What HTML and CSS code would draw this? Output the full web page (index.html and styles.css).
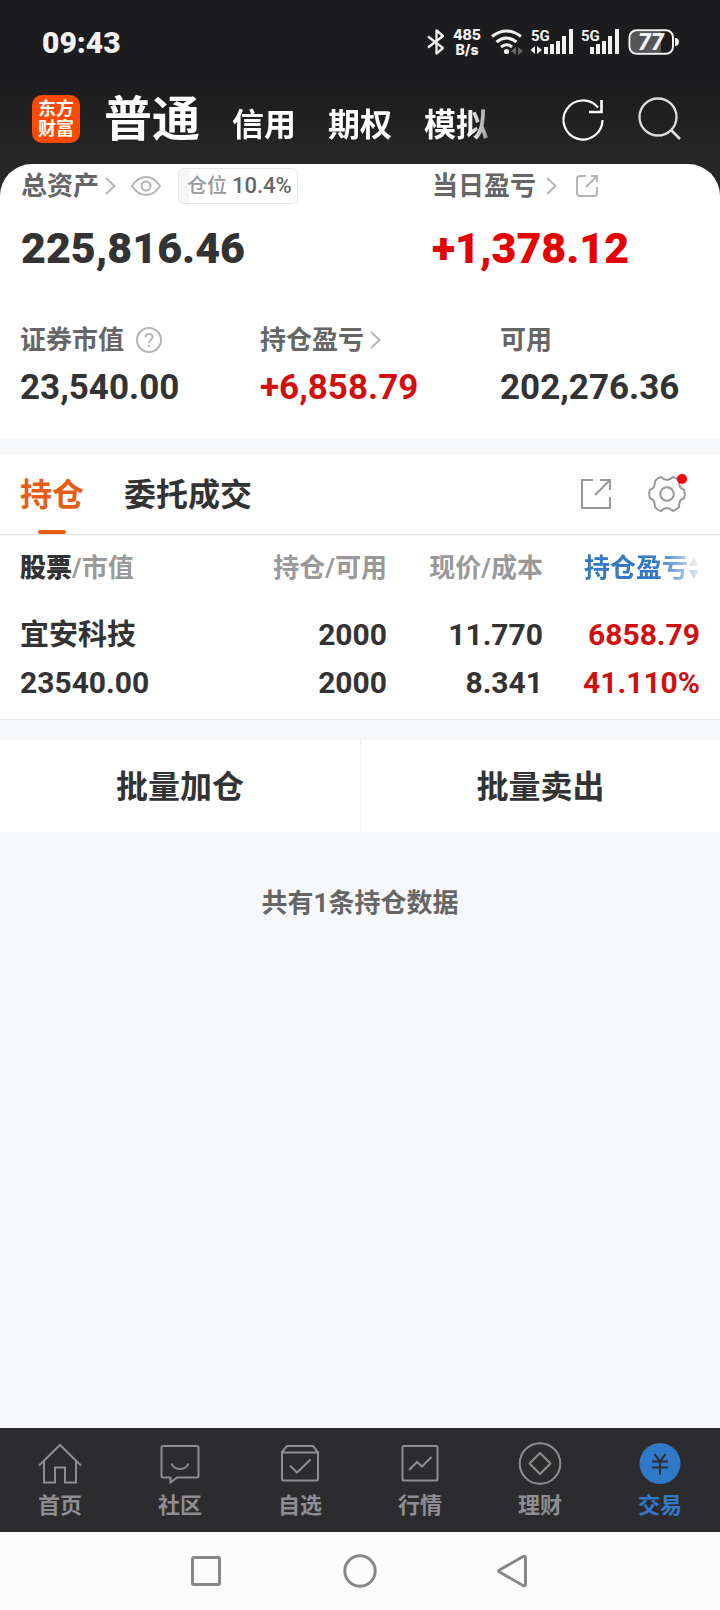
FILE: index.html
```html
<!DOCTYPE html>
<html lang="zh-CN">
<head>
<meta charset="utf-8">
<meta name="viewport" content="width=device-width, initial-scale=1">
<title>普通交易</title>
<link rel="stylesheet" href="styles.css">
</head>
<body>
<header class="top">
  <div class="status">
    <time class="clock">09:43</time>
    <div class="status-icons">
      <svg class="bt" width="18" height="26" viewBox="0 0 18 26"><path d="M1 7.500L16 19L9.500 24.500V1.500L16 7L1 18.500" fill="none" stroke="currentColor" stroke-width="2.300" stroke-linejoin="round"/></svg>
      <span class="speed"><span>485</span><span>B/s</span></span>
      <svg class="wifi" width="32" height="26" viewBox="0 0 32 26"><g fill="none" stroke="currentColor" stroke-width="3"><path d="M1 7.500Q15.500-3.500 30 7.500"/><path d="M5.500 13Q15.500 5 25.500 13"/><path d="M10 18Q15.500 13.500 21 18"/></g><circle cx="15.500" cy="22.500" r="2.600" fill="currentColor"/><path d="M25 18v8l-5-4zM27 18v8l5-4z" fill="#666"/></svg>
      <svg class="cell" width="42" height="26" viewBox="0 0 42 26"><text x="0" y="12" class="net">5G</text><path d="M4 17v8l-4.500-4zM6 17v8l5-4z" fill="currentColor"/><path d="M13 18h4v7h-4zM19 15h4v10h-4zM25 12h4v13h-4zM31 7h4v18h-4zM38 0h4v25h-4z" fill="currentColor"/></svg>
      <svg class="cell" width="38" height="26" viewBox="0 0 38 26"><text x="0" y="12" class="net">5G</text><path d="M9 18h4v7H9zM15 15h4v10h-4zM21 12h4v13h-4zM27 7h4v18h-4zM34 0h4v25h-4z" fill="currentColor"/></svg>
      <svg class="battery" width="52" height="26" viewBox="0 0 52 26"><path d="M7 2.500H33V23.500H7Q3 23.500 3 19V7Q3 2.500 7 2.500z" fill="#555557"/><rect x="1.500" y="1.200" width="43.500" height="23.600" rx="7" fill="none" stroke="currentColor" stroke-width="2"/><path d="M47 9q4 0 4 4t-4 4z" fill="currentColor"/><text x="23" y="21" text-anchor="middle" class="level">77</text></svg>
    </div>
  </div>
  <div class="titlebar">
    <a class="logo" href="#"><span>东方</span><span>财富</span></a>
    <nav class="accounts">
      <a class="current" href="#">普通</a><a href="#">信用</a><a href="#">期权</a><a href="#">模拟</a>
    </nav>
    <button class="icon-btn" aria-label="刷新"><svg width="44" height="44" viewBox="0 0 44 44"><path d="M41.500 23A19.500 19.500 0 1 1 37 10.500" fill="none" stroke="#fff" stroke-width="2.200"/><path d="M40.500 3v12H28" fill="none" stroke="#fff" stroke-width="2.600"/></svg></button>
    <button class="icon-btn" aria-label="搜索"><svg width="44" height="44" viewBox="0 0 44 44"><circle cx="20" cy="20" r="18.500" fill="none" stroke="#ddd" stroke-width="2.300"/><path d="M33 33L42 42" stroke="#ddd" stroke-width="2.600"/></svg></button>
  </div>
</header>
<main>
  <div class="sheet-back">
    <section class="sheet">
      <div class="totals">
        <div>
          <div class="label first">总资产
            <svg class="chev" width="11" height="18" viewBox="0 0 11 18"><path d="M1 1L9.500 9L1 17"/></svg>
            <svg class="eye" width="30" height="20" viewBox="0 0 30 20"><path d="M1 10Q7 1 15 1T29 10Q23 19 15 19T1 10z"/><circle cx="15" cy="10" r="4.500"/></svg>
            <span class="ratio">仓位 <b>10.4%</b></span>
          </div>
          <p class="big">225,816.46</p>
        </div>
        <div>
          <div class="label first daily">当日盈亏
            <svg class="chev" width="11" height="18" viewBox="0 0 11 18"><path d="M1 1L9.500 9L1 17"/></svg>
            <svg class="share" width="24" height="24" viewBox="0 0 24 24"><path d="M11 2H5Q2 2 2 5V19Q2 22 5 22H19Q22 22 22 19V13M16 2H22V8M22 2L11 13"/></svg>
          </div>
          <p class="big up">+1,378.12</p>
        </div>
      </div>
      <div class="stats">
        <div><div class="label">证券市值 <svg class="help" width="26" height="26" viewBox="0 0 26 26"><circle cx="13" cy="13" r="12"/><path d="M9.500 10.500Q9.500 7 13 7T16.500 10Q16.500 11.500 14.500 13T13 16M13 18V20"/></svg></div><p class="mid">23,540.00</p></div>
        <div><div class="label">持仓盈亏 <svg class="chev" width="11" height="18" viewBox="0 0 11 18"><path d="M1 1L9.500 9L1 17"/></svg></div><p class="mid up">+6,858.79</p></div>
        <div><div class="label">可用</div><p class="mid">202,276.36</p></div>
      </div>
    </section>
  </div>
  <section class="holdings">
    <div class="tabs">
      <button class="tab active">持仓</button>
      <button class="tab">委托成交</button>
      <span class="tools">
        <button class="icon-btn" aria-label="分享"><svg width="32" height="32" viewBox="0 0 32 32"><path d="M13 2H2V30H30V19M20 2H30V12M30 2L15 17" fill="none" stroke="#999" stroke-width="2"/></svg></button>
        <button class="icon-btn gear" aria-label="设置"><svg width="38" height="38" viewBox="0 0 38 38"><g fill="none" stroke="#999" stroke-width="2"><path d="M13 2Q16 5 19 5T25 2Q29 3 31 6Q31 14 36 14.500Q37.500 19 36 23.500Q31 24 31 32Q28 35 25 36Q22 33 19 33T13 36Q9 35 7 32Q7 24 2 23.500Q.5 19 2 14.500Q7 14 7 6Q9 3 13 2z" stroke-linejoin="round"/><circle cx="19" cy="19" r="6.800"/></g></svg></button>
      </span>
    </div>
    <table class="grid">
      <thead><tr><th scope="col"><b>股票</b>/市值</th><th scope="col">持仓/可用</th><th scope="col">现价/成本</th><th scope="col" class="sorted"><span class="sort">持仓盈亏<svg width="12" height="24" viewBox="0 0 12 24"><path d="M6 1L11 10H1z" fill="#aaa"/><path d="M6 23L1 14H11z" fill="#3478c8"/></svg></span></th></tr></thead>
      <tbody>
        <tr><td class="name">宜安科技</td><td>2000</td><td>11.770</td><td class="up">6858.79</td></tr>
        <tr><td>23540.00</td><td>2000</td><td>8.341</td><td class="up">41.110%</td></tr>
      </tbody>
    </table>
  </section>
  <div class="batch"><button>批量加仓</button><button>批量卖出</button></div>
  <p class="count">共有1条持仓数据</p>
</main>
<nav class="tabbar">
  <a href="#"><svg width="44" height="44" viewBox="0 0 44 44"><path d="M1 22.500L22 2L43 22.500M6 18V39.500H17V24.500H27V39.500H38V18"/></svg>首页</a>
  <a href="#"><svg width="44" height="44" viewBox="0 0 44 44"><path d="M5 3H39Q40.500 3 40.500 4.500V33Q40.500 34.500 39 34.500H19L12.500 39.500V34.500H5Q3.500 34.500 3.500 33V4.500Q3.500 3 5 3zM13.500 20.500Q15.500 26 22 26T30.500 20.500"/></svg>社区</a>
  <a href="#"><svg width="44" height="44" viewBox="0 0 44 44"><path d="M4 9L9 3H35L40 9V36Q40 37.500 38.500 37.500H5.500Q4 37.500 4 36zM4 9.500H40M12 22.500L19 29.500L32.500 16.500"/></svg>自选</a>
  <a href="#"><svg width="44" height="44" viewBox="0 0 44 44"><rect x="4.500" y="3" width="35" height="34.500" rx="1.500"/><path d="M11 27L19 19L24 23.500L33.500 14"/></svg>行情</a>
  <a href="#"><svg width="44" height="44" viewBox="0 0 44 44"><circle cx="22" cy="20.500" r="20.300"/><path d="M22 10L32.500 20.500L22 31L11.500 20.500z" stroke-linejoin="round"/></svg>理财</a>
  <a href="#" class="on"><svg width="44" height="44" viewBox="0 0 44 44"><circle cx="22" cy="20.500" r="20.500" class="coin"/><path d="M16.500 11L22 18.500L27.500 11M22 18V31.500M14 18.500H30M14 24.500H30" class="yen"/></svg>交易</a>
</nav>
<div class="sysnav">
  <button class="icon-btn" aria-label="最近任务"><svg width="34" height="34" viewBox="0 0 34 34"><rect x="3.500" y="3.500" width="27" height="27" rx="1.500"/></svg></button>
  <button class="icon-btn" aria-label="主屏幕"><svg width="34" height="34" viewBox="0 0 34 34"><circle cx="17" cy="17" r="15.200"/></svg></button>
  <button class="icon-btn" aria-label="返回"><svg width="34" height="34" viewBox="0 0 34 34"><path d="M2.500 16L26 2.500Q28.500 1.500 28.500 4V30Q28.500 32.500 26 31.500L2.500 18Q.5 17 2.500 16z"/></svg></button>
</div>
</body>
</html>
```
FILE: styles.css
```css
* { box-sizing: border-box; }
body {
  margin: 0;
  min-height: 100vh;
  display: flex;
  flex-direction: column;
  background: #f7f8fa;
  color: #333;
  font-family: Roboto, "Noto Sans CJK SC", sans-serif;
  font-weight: 700;
}
p { margin: 0; }
a { color: inherit; text-decoration: none; }
button { border: 0; padding: 0; background: none; color: inherit; font: inherit; }
svg { flex: none; display: block; overflow: visible; }
.icon-btn { display: flex; }

.top { background: linear-gradient(#1c1c1e 50%, #272727); color: #fff; }
.status {
  height: 84px;
  padding: 0 40px 0 42px;
  display: flex;
  align-items: center;
  justify-content: space-between;
  color: #f2f2f2;
}
.clock { font-size: 30px; font-weight: 900; }
.status-icons { display: flex; align-items: center; gap: 8px; }
.speed {
  display: flex;
  flex-direction: column;
  align-items: center;
  font: 800 14px/15px Inter, sans-serif;
}
.wifi { margin-left: 2px; }
.battery { margin-left: 1px; }
.net { font: 700 15px Roboto, sans-serif; fill: currentColor; }
.level { font: italic 900 23px Roboto, sans-serif; fill: currentColor; }
.titlebar {
  height: 80px;
  padding: 0 38px 10px 32px;
  display: flex;
  align-items: center;
}
.titlebar .icon-btn + .icon-btn { margin-left: 33px; }
.logo {
  width: 48px;
  height: 48px;
  border-radius: 10px;
  background: #ff4a00;
  display: flex;
  flex-direction: column;
  align-items: center;
  justify-content: center;
  font-size: 18px;
  line-height: 20px;
}
.accounts {
  flex: 1;
  margin-left: 24px;
  padding-top: 6px;
  display: flex;
  align-items: baseline;
  gap: 32px;
  font-size: 32px;
  line-height: 60px;
  white-space: nowrap;
  overflow: hidden;
  -webkit-mask-image: linear-gradient(to right, #000 calc(100% - 92px), transparent calc(100% - 50px));
  mask-image: linear-gradient(to right, #000 calc(100% - 92px), transparent calc(100% - 50px));
}
.accounts .current { font-size: 48px; }

.sheet-back { background: #272727; }
.sheet { background: #fff; border-radius: 32px 32px 0 0; padding-bottom: 30px; }
.totals { display: grid; grid-template-columns: 3fr 2fr; }
.totals > :first-child { padding-left: 21px; }
.label {
  display: flex;
  align-items: center;
  height: 36px;
  font-size: 26px;
  line-height: 36px;
  color: #666;
  white-space: nowrap;
}
.label.first { height: 44px; }
.label svg { fill: none; stroke: #b5b5b5; stroke-width: 2; }
.label .chev { margin-left: 6px; }
.daily .chev { margin-left: 10px; }
.first .eye { margin-left: 15px; }
.first .share { margin-left: 18px; }
.label .help { margin-left: 12px; }
.ratio {
  margin-left: 17px;
  height: 36px;
  padding: 0 5px 0 8px;
  border: 1px solid #e6e6e8;
  border-radius: 6px;
  background: linear-gradient(to right, #f6f6f9 10px, #fff 10px);
  font-size: 20px;
  line-height: 34px;
  font-weight: 500;
  color: #999;
}
.ratio b { font-size: 22px; font-weight: 500; color: #666; }
.big { margin-top: 16px; font-size: 43px; line-height: 48px; font-weight: 900; }
.stats { display: grid; grid-template-columns: repeat(3, 1fr); margin-top: 50px; }
.stats > * { padding-left: 20px; }
.mid { margin-top: 10px; font-size: 35px; line-height: 40px; }
.up { color: #d20f0f; }
.big.up { color: #e60000; }

.holdings { margin-top: 16px; background: #fff; border-bottom: 1px solid #e8e8ea; }
.tabs {
  height: 81px;
  padding: 0 34px 0 20px;
  display: flex;
  align-items: stretch;
  gap: 40px;
  border-bottom: 1px solid #dcdcdc;
  font-size: 32px;
}
.tab { padding-bottom: 4px; }
.tab.active { color: #e85d16; position: relative; }
.tab.active::after {
  content: "";
  position: absolute;
  left: 50%;
  bottom: 0;
  width: 28px;
  height: 4px;
  margin-left: -14px;
  border-radius: 2px;
  background: #e85d16;
}
.tools { margin-left: auto; display: flex; align-items: center; gap: 36px; }
.gear { position: relative; }
.gear::after {
  content: "";
  position: absolute;
  right: -1px;
  top: -1px;
  width: 10px;
  height: 10px;
  border-radius: 50%;
  background: #f00;
}
.grid { width: 100%; border-collapse: collapse; table-layout: fixed; margin-bottom: 12px; }
.grid th, .grid td { padding: 0; text-align: right; white-space: nowrap; font-size: 30px; line-height: 48px; }
.grid th { height: 76px; padding-bottom: 10px; font-size: 26px; line-height: 36px; color: #999; }
.grid th b { color: #333; }
.grid tr > :first-child { text-align: left; padding-left: 20px; width: 30%; }
.grid tr > :last-child { padding-right: 20px; }
.grid tr > :nth-child(4) { width: 177px; }
.grid tr > :nth-child(3) { width: 156px; }
.grid .name { font-size: 29px; }
.grid .sorted { color: #3478c8; }
.sort {
  display: flex;
  align-items: center;
  justify-content: flex-end;
  -webkit-mask-image: linear-gradient(to right, #000 calc(100% - 44px), rgba(0, 0, 0, 0.15));
  mask-image: linear-gradient(to right, #000 calc(100% - 44px), rgba(0, 0, 0, 0.15));
}

.batch { margin-top: 20px; display: grid; grid-template-columns: 1fr 1fr; background: #fff; }
.batch button { height: 92px; padding-bottom: 4px; font-size: 32px; }
.batch button + button { border-left: 1px solid #f2f2f4; }
.count { margin-top: 53px; text-align: center; font-size: 26px; line-height: 36px; color: #666; }

main { flex: 1; }
.tabbar {
  height: 104px;
  display: grid;
  grid-template-columns: repeat(6, 1fr);
  background: #2c2c2e;
  color: #8e8e92;
  font-size: 22px;
  line-height: 32px;
}
.tabbar a { display: flex; flex-direction: column; align-items: center; padding-top: 15px; gap: 3px; }
.tabbar svg { fill: none; stroke: #8e8e90; stroke-width: 2; }
.tabbar .on { color: #3478c8; }
.tabbar .coin { fill: #3078c8; stroke: none; }
.tabbar .yen { stroke: #2c2c2e; }
.sysnav {
  height: 78px;
  display: flex;
  align-items: center;
  justify-content: center;
  gap: 120px;
  background: #fcfcfc;
}
.sysnav svg { fill: none; stroke: #888; stroke-width: 3; }
```
